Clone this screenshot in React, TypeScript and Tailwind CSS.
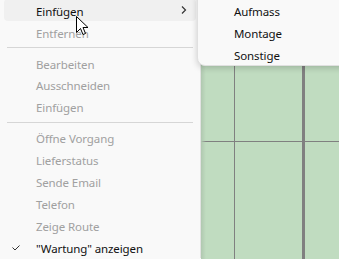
import React from "react";

const font = { fontFamily: '"Noto Sans", "Open Sans", sans-serif' };

function Row({ label, disabled, hover, chevron, check }: { label: string; disabled?: boolean; hover?: boolean; chevron?: boolean; check?: boolean }) {
  return (
    <div className={`mx-[4px] h-[22px] rounded-[4px] flex items-center relative ${hover ? "bg-[#f0f0f0]" : ""}`}>
      {check && (
        <svg className="absolute left-[8px] top-[9px]" width="8" height="6" viewBox="0 0 8 6">
          <path d="M0.5 2.5 L3 5 L7.5 0.5" fill="none" stroke="#333" strokeWidth="1" />
        </svg>
      )}
      <span className={`pl-[32px] pt-[3px] text-[11.5px] tracking-[-0.1px] leading-none ${disabled ? "text-[#a0a0a0]" : "text-[#111]"}`}>{label}</span>
      {chevron && (
        <svg className="absolute left-[177px] top-[7px]" width="6" height="8" viewBox="0 0 6 8">
          <path d="M1 0.5 L4.5 4 L1 7.5" fill="none" stroke="#333" strokeWidth="1.2" />
        </svg>
      )}
    </div>
  );
}

function Sep() {
  return (
    <div className="h-[9px] flex items-center px-[7px]">
      <div className="h-px w-full bg-[#d6d6d6] mt-[1px]" />
    </div>
  );
}

function SubRow({ label }: { label: string }) {
  return (
    <div className="h-[22px] flex items-center pl-[36px] pt-[3px] text-[11.5px] tracking-[-0.1px] text-[#111] leading-none">{label}</div>
  );
}

export default function App() {
  return (
    <div className="relative w-[339px] h-[259px] overflow-hidden flex bg-[#f9f9f9]" style={font}>
      <div className="w-[201px] h-full bg-[#f9f9f9] border-r border-[#e2e2e2] flex flex-col -mt-[1px]">
        <Row label="Einfügen" hover chevron />
        <Row label="Entfernen" disabled />
        <Sep />
        <Row label="Bearbeiten" disabled />
        <Row label="Ausschneiden" disabled />
        <Row label="Einfügen" disabled />
        <Sep />
        <Row label="Öffne Vorgang" disabled />
        <Row label="Lieferstatus" disabled />
        <Row label="Sende Email" disabled />
        <Row label="Telefon" disabled />
        <Row label="Zeige Route" disabled />
        <Row label={'"Wartung" anzeigen'} check />
      </div>
      <div className="flex-1 h-full bg-[#c0dcc0] grid grid-cols-[33px_1px_67px_3px_1fr] grid-rows-[141px_1px_1fr] relative">
        <div className="col-start-2 row-start-1 row-span-3 bg-[#808080]" />
        <div className="col-start-4 row-start-1 row-span-3 bg-[#808080]" />
        <div className="col-start-1 col-span-5 row-start-2 bg-[#808080]" />
        <div className="absolute left-0 top-0 bottom-0 w-[5px] bg-gradient-to-r from-[#b0c8b0] to-transparent" />
      </div>

      <div className="absolute left-[197px] -top-[10px] w-[160px] h-[76px] bg-[#f9f9f9] rounded-[8px] shadow-[0_2px_6px_rgba(0,0,0,0.18)] border border-[#e0e0e0] pt-[8px] flex flex-col">
        <SubRow label="Aufmass" />
        <SubRow label="Montage" />
        <SubRow label="Sonstige" />
      </div>

      <svg className="absolute left-[76px] top-[16px]" width="13" height="20" viewBox="0 0 13 20">
        <path d="M0.5 0.5 L0.5 16.5 L4.5 12.5 L7 18.5 L9.5 17.5 L7 11.5 L12 11.5 Z" fill="#fff" stroke="#000" strokeWidth="1" strokeLinejoin="miter" />
      </svg>
    </div>
  );
}
